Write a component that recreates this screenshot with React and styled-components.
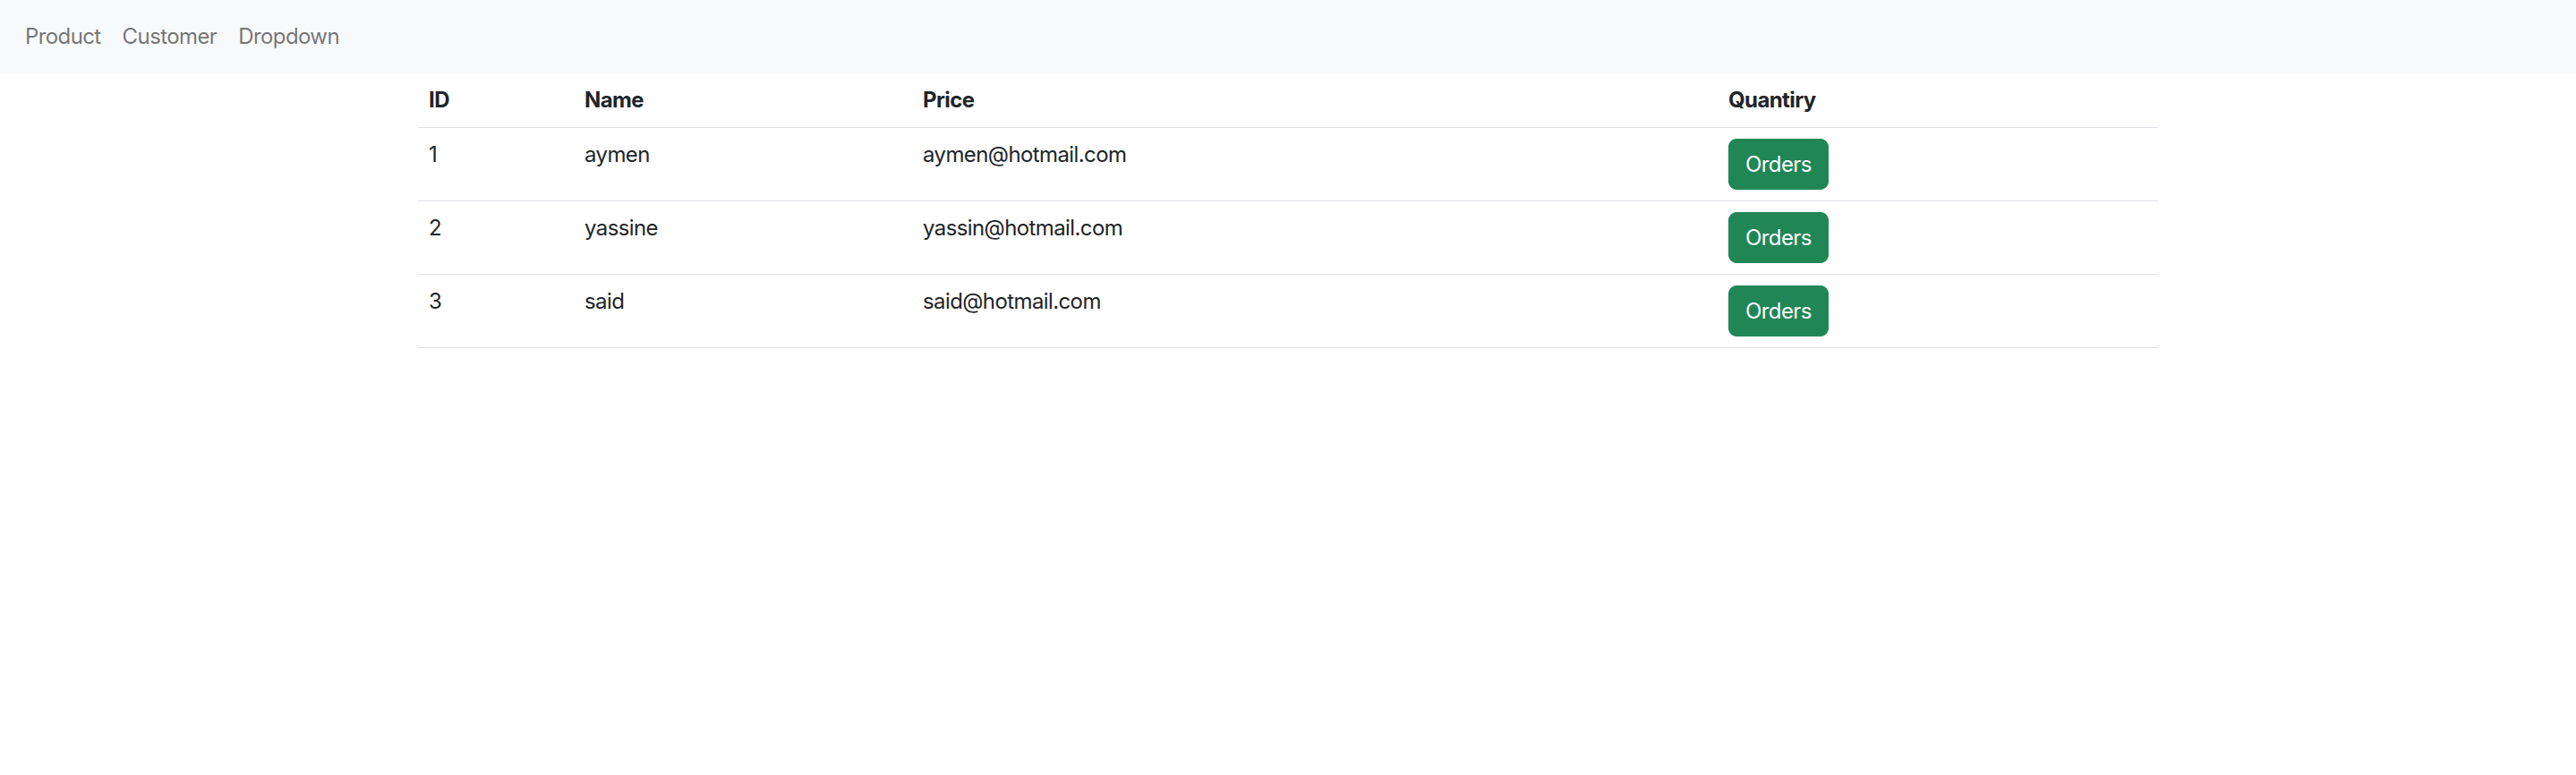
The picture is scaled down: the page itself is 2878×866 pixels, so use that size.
import React from "react";
import styled, { createGlobalStyle } from "styled-components";

const GlobalStyle = createGlobalStyle`
  * {
    box-sizing: border-box;
  }

  body {
    margin: 0;
    background: #fff;
    color: #212529;
    font-family: Inter, "Noto Sans", "Liberation Sans", sans-serif;
    font-size: 24px;
    line-height: 1.5;
    letter-spacing: -0.6px;
  }
`;

const Navbar = styled.nav`
  display: flex;
  align-items: center;
  height: 82px;
  padding: 0 18px;
  background: #f8f9fa;
`;

const NavLink = styled.a`
  padding: 0 12px;
  font-size: 24px;
  line-height: 36px;
  color: rgba(0, 0, 0, 0.55);
  text-decoration: none;
  cursor: pointer;

  &:first-child {
    padding-left: 10px;
  }
`;

const Container = styled.main`
  width: 1944px;
  margin: 0 auto;
`;

const Table = styled.table`
  width: 100%;
  border-collapse: collapse;
  vertical-align: top;
  table-layout: fixed;
`;

const Th = styled.th`
  width: ${(p) => p.$w || "auto"};
  padding: 12px;
  text-align: left;
  font-weight: 700;
  line-height: 36px;
  color: #212529;
  border-bottom: 1px solid #dee2e6;
`;

const Td = styled.td`
  padding: 12px;
  line-height: 36px;
  color: #212529;
  vertical-align: top;
  border-bottom: 1px solid #dee2e6;
`;

const OrdersBtn = styled.button`
  display: inline-block;
  height: 57px;
  padding: 9px 18px;
  font-family: inherit;
  font-size: 24px;
  line-height: 36px;
  letter-spacing: -0.6px;
  color: #fff;
  background: #208656;
  border: 1.5px solid #208656;
  border-radius: 9px;
  cursor: pointer;
`;

const customers = [
  { id: 1, name: "aymen", email: "aymen@hotmail.com" },
  { id: 2, name: "yassine", email: "yassin@hotmail.com" },
  { id: 3, name: "said", email: "said@hotmail.com" },
];

const App = () => {
  return (
    <>
      <GlobalStyle />
      <Navbar>
        <NavLink>Product</NavLink>
        <NavLink>Customer</NavLink>
        <NavLink>Dropdown</NavLink>
      </Navbar>
      <Container>
        <Table>
          <thead>
            <tr>
              <Th $w="174px">ID</Th>
              <Th $w="378px">Name</Th>
              <Th $w="900px">Price</Th>
              <Th>Quantiry</Th>
            </tr>
          </thead>
          <tbody>
            {customers.map((c) => (
              <tr key={c.id}>
                <Td>{c.id}</Td>
                <Td>{c.name}</Td>
                <Td>{c.email}</Td>
                <Td>
                  <OrdersBtn>Orders</OrdersBtn>
                </Td>
              </tr>
            ))}
          </tbody>
        </Table>
      </Container>
    </>
  );
};

export default App;
